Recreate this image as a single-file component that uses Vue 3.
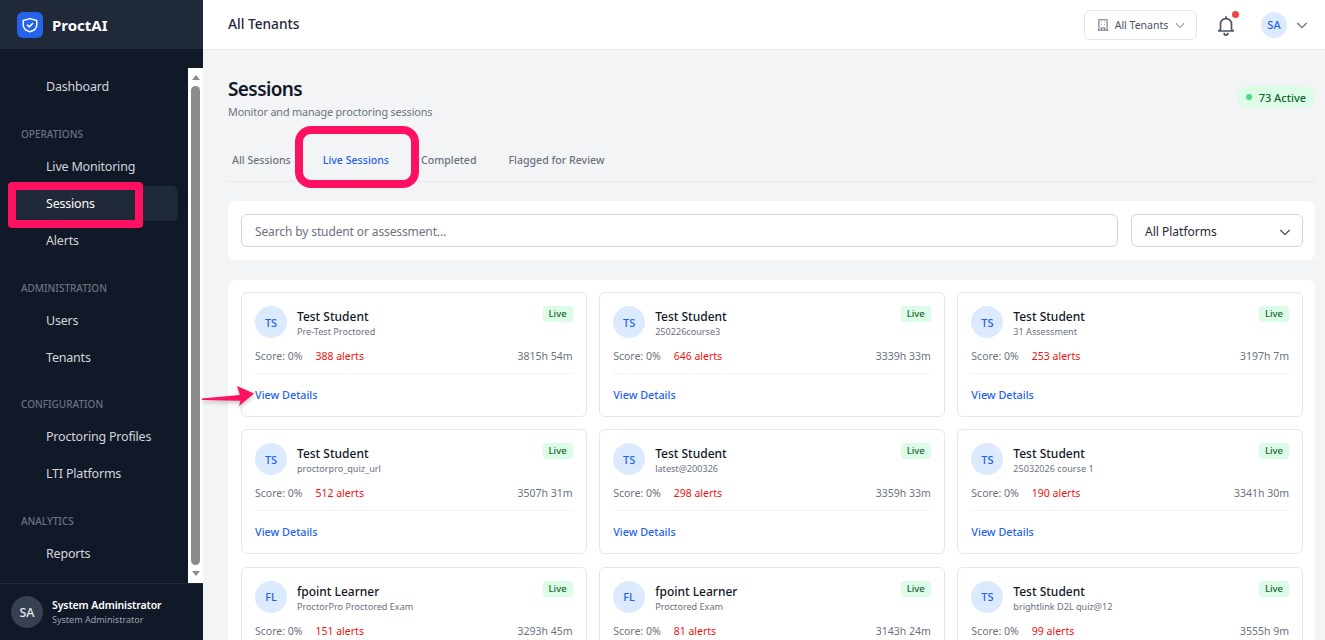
<script setup>
const nav = [
  { items: ['Dashboard'] },
  { label: 'Operations', items: ['Live Monitoring', 'Sessions', 'Alerts'] },
  { label: 'Administration', items: ['Users', 'Tenants'] },
  { label: 'Configuration', items: ['Proctoring Profiles', 'LTI Platforms'] },
  { label: 'Analytics', items: ['Reports'] },
]

const tabs = ['All Sessions', 'Live Sessions', 'Completed', 'Flagged for Review']

const sessions = [
  { initials: 'TS', name: 'Test Student', exam: 'Pre-Test Proctored', alerts: 388, time: '3815h 54m' },
  { initials: 'TS', name: 'Test Student', exam: '250226course3', alerts: 646, time: '3339h 33m' },
  { initials: 'TS', name: 'Test Student', exam: '31 Assessment', alerts: 253, time: '3197h 7m' },
  { initials: 'TS', name: 'Test Student', exam: 'proctorpro_quiz_url', alerts: 512, time: '3507h 31m' },
  { initials: 'TS', name: 'Test Student', exam: 'latest@200326', alerts: 298, time: '3359h 33m' },
  { initials: 'TS', name: 'Test Student', exam: '25032026 course 1', alerts: 190, time: '3341h 30m' },
  { initials: 'FL', name: 'fpoint Learner', exam: 'ProctorPro Proctored Exam', alerts: 151, time: '3293h 45m' },
  { initials: 'FL', name: 'fpoint Learner', exam: 'Proctored Exam', alerts: 81, time: '3143h 24m' },
  { initials: 'TS', name: 'Test Student', exam: 'brightlink D2L quiz@12', alerts: 99, time: '3555h 9m' },
]
</script>

<template>
  <div class="app">
    <aside class="sidebar">
      <div class="brand">
        <div class="logo">
          <svg width="18" height="18" viewBox="0 0 24 24" fill="none" stroke="#fff" stroke-width="2" stroke-linecap="round" stroke-linejoin="round">
            <path d="M12 3.5l9 2.5v6c0 4.5-3.8 7.5-9 9-5.2-1.5-9-4.5-9-9V6z" />
            <path d="M8.5 12l2.5 2.5 4.5-4.5" />
          </svg>
        </div>
        <span class="brand-name">ProctAI</span>
      </div>
      <div class="nav-wrap">
        <nav class="nav">
          <div v-for="(group, i) in nav" :key="i" class="group">
            <div v-if="group.label" class="group-label">{{ group.label }}</div>
            <a v-for="item in group.items" :key="item" class="nav-item" :class="{ active: item === 'Sessions' }">{{ item }}</a>
          </div>
        </nav>
        <div class="scrollbar">
          <span class="arrow up"></span>
          <span class="thumb"></span>
          <span class="arrow down"></span>
        </div>
      </div>
      <div class="user">
        <div class="user-avatar">SA</div>
        <div>
          <div class="user-name">System Administrator</div>
          <div class="user-role">System Administrator</div>
        </div>
      </div>
    </aside>

    <div class="main">
      <header class="topbar">
        <h1 class="top-title">All Tenants</h1>
        <div class="top-actions">
          <button class="tenant-btn">
            <svg width="14" height="14" viewBox="0 0 24 24" fill="none" stroke="#6b7280" stroke-width="1.8">
              <path d="M5 21V3h14v18M3 21h18M9 21v-4h6v4M9 7h1M14 7h1M9 11h1M14 11h1" />
            </svg>
            <span>All Tenants</span>
            <svg width="14" height="14" viewBox="0 0 24 24" fill="none" stroke="#9ca3af" stroke-width="2"><path d="M5 9l7 7 7-7" /></svg>
          </button>
          <div class="bell">
            <svg width="22" height="22" viewBox="0 0 24 24" fill="none" stroke="#4b5563" stroke-width="1.8" stroke-linecap="round" stroke-linejoin="round">
              <path d="M6 17V11a6 6 0 0 1 12 0v6l2 1.5H4z" />
              <path d="M10 21a2 2 0 0 0 4 0M12 3v2" />
            </svg>
            <span class="bell-dot"></span>
          </div>
          <div class="avatar-top">SA</div>
          <svg width="16" height="16" viewBox="0 0 24 24" fill="none" stroke="#6b7280" stroke-width="2"><path d="M5 9l7 7 7-7" /></svg>
        </div>
      </header>

      <main class="content">
        <div class="page-head">
          <div>
            <h2 class="page-title">Sessions</h2>
            <p class="page-sub">Monitor and manage proctoring sessions</p>
          </div>
          <div class="active-pill"><span class="pill-dot"></span>73 Active</div>
        </div>

        <div class="tabs">
          <span v-for="t in tabs" :key="t" class="tab" :class="{ current: t === 'Live Sessions' }">{{ t }}</span>
        </div>

        <div class="filters">
          <div class="search">Search by student or assessment...</div>
          <div class="select">
            All Platforms
            <svg width="16" height="16" viewBox="0 0 24 24" fill="none" stroke="#4b5563" stroke-width="2"><path d="M5 9l7 7 7-7" /></svg>
          </div>
        </div>

        <section class="panel">
          <article v-for="(s, i) in sessions" :key="i" class="card">
            <div class="card-top">
              <div class="initials">{{ s.initials }}</div>
              <div class="who">
                <div class="name">{{ s.name }}</div>
                <div class="exam">{{ s.exam }}</div>
              </div>
              <span class="live">Live</span>
            </div>
            <div class="stats">
              <span>Score: 0%</span>
              <span class="alerts">{{ s.alerts }} alerts</span>
              <span class="time">{{ s.time }}</span>
            </div>
            <div class="card-foot"><a class="details">View Details</a></div>
          </article>
        </section>
      </main>
    </div>

    <!-- annotations drawn over the screenshot -->
    <div class="mark mark-nav"></div>
    <div class="mark mark-tab"></div>
    <svg class="mark-arrow" width="56" height="26" viewBox="0 0 56 26">
      <path d="M1 14.5L39 11 36 2 53 9.5 38 22 39.5 16.7 1 16z" fill="#ff1060" />
    </svg>
  </div>
</template>

<style>
html, body {
  margin: 0;
  height: 100%;
  overflow: hidden;
}
</style>

<style scoped>
.app {
  position: relative;
  display: flex;
  height: 640px;
  overflow: hidden;
  background: #f3f4f6;
  font-family: "Noto Sans", Inter, sans-serif;
  color: #111827;
}

/* Sidebar */
.sidebar {
  width: 203px;
  flex-shrink: 0;
  display: flex;
  flex-direction: column;
  background: #111827;
}
.brand {
  height: 49px;
  flex-shrink: 0;
  display: flex;
  align-items: center;
  gap: 9px;
  padding-left: 17px;
  background: #1f2937;
}
.logo {
  width: 26px;
  height: 26px;
  border-radius: 6px;
  background: #2563eb;
  display: flex;
  align-items: center;
  justify-content: center;
}
.brand-name {
  color: #fff;
  font-size: 15px;
  font-weight: 700;
}
.nav-wrap {
  flex: 1;
  min-height: 0;
  display: flex;
  margin-top: 19px;
}
.nav {
  flex: 1;
  padding: 1px 10px 0 12px;
}
.group + .group {
  margin-top: 22.75px;
}
.group-label {
  height: 15px;
  line-height: 15px;
  margin: 0 0 7px 9px;
  font-size: 10px;
  font-weight: 500;
  text-transform: uppercase;
  color: #6b7280;
}
.nav-item {
  display: block;
  height: 35px;
  line-height: 35px;
  margin-bottom: 2px;
  padding-left: 34px;
  font-size: 12.5px;
  letter-spacing: -0.2px;
  border-radius: 6px;
  color: #d1d5db;
}
.nav-item.active {
  background: #1f2937;
  color: #fff;
}
.scrollbar {
  width: 15px;
  flex-shrink: 0;
  background: #fff;
  display: flex;
  flex-direction: column;
  align-items: center;
}
.thumb {
  flex: 1;
  width: 9px;
  margin: 6px 0;
  border-radius: 5px;
  background: #8b8b8b;
}
.arrow {
  width: 0;
  height: 0;
  margin-top: 7px;
  border-left: 4px solid transparent;
  border-right: 4px solid transparent;
  border-bottom: 5px solid #8b8b8b;
}
.arrow.down {
  margin: 0 0 7px;
  border-bottom: 0;
  border-top: 5px solid #8b8b8b;
}
.user {
  height: 57px;
  flex-shrink: 0;
  display: flex;
  align-items: center;
  gap: 9px;
  padding-left: 11px;
  box-sizing: border-box;
  border-top: 1px solid #1f2937;
}
.user-avatar {
  width: 32px;
  height: 32px;
  border-radius: 50%;
  background: #374151;
  color: #e5e7eb;
  font-size: 12.5px;
  font-weight: 500;
  display: flex;
  align-items: center;
  justify-content: center;
}
.user-name {
  color: #fff;
  font-size: 10.5px;
  font-weight: 600;
  letter-spacing: -0.1px;
  line-height: 16px;
}
.user-role {
  color: #9ca3af;
  font-size: 9px;
  line-height: 14px;
}

/* Main */
.main {
  flex: 1;
  min-width: 0;
  display: flex;
  flex-direction: column;
}
.topbar {
  height: 50px;
  flex-shrink: 0;
  box-sizing: border-box;
  display: flex;
  align-items: center;
  justify-content: space-between;
  padding: 0 15px 0 25px;
  background: #fff;
  border-bottom: 1px solid #e5e7eb;
}
.top-title {
  margin: -2px 0 0;
  font-size: 13.7px;
  font-weight: 500;
  color: #1f2937;
}
.top-actions {
  display: flex;
  align-items: center;
}
.tenant-btn {
  width: 113px;
  height: 30px;
  padding: 0 9px 0 11px;
  display: flex;
  align-items: center;
  justify-content: space-between;
  background: #fff;
  border: 1px solid #e5e7eb;
  border-radius: 6px;
  font: 400 10.5px "Noto Sans", Inter, sans-serif;
  color: #4b5563;
}
.bell {
  position: relative;
  margin: 0 24px 0 18px;
  height: 22px;
}
.bell-dot {
  position: absolute;
  top: -3px;
  right: -2px;
  width: 7px;
  height: 7px;
  border-radius: 50%;
  background: #ef4444;
}
.avatar-top {
  width: 26px;
  height: 26px;
  margin-right: 7px;
  border-radius: 50%;
  background: #dbeafe;
  color: #2563eb;
  font-size: 11px;
  font-weight: 500;
  display: flex;
  align-items: center;
  justify-content: center;
}

.content {
  flex: 1;
  min-height: 0;
  padding: 0 10px 0 25px;
}
.page-head {
  display: flex;
  justify-content: space-between;
  align-items: flex-start;
  padding-top: 26px;
}
.page-title {
  margin: 0;
  font-size: 19px;
  letter-spacing: -0.6px;
  line-height: 26px;
  font-weight: 600;
}
.page-sub {
  margin: 2px 0 0;
  font-size: 10.8px;
  letter-spacing: -0.13px;
  line-height: 16px;
  color: #6b7280;
}
.active-pill {
  margin-top: 10px;
  height: 22px;
  padding: 0 9px;
  display: flex;
  align-items: center;
  gap: 7px;
  border-radius: 11px;
  background: #dcfce7;
  color: #166534;
  font-size: 11px;
  font-weight: 500;
}
.pill-dot {
  width: 6px;
  height: 6px;
  border-radius: 50%;
  background: #4ade80;
}
.tabs {
  display: flex;
  gap: 32px;
  height: 38px;
  margin-top: 23px;
  padding-left: 4px;
  border-bottom: 1px solid #e5e7eb;
}
.tab {
  line-height: 35px;
  font-size: 10.6px;
  font-weight: 500;
  color: #6b7280;
}
.tab.current {
  color: #2563eb;
}
.filters {
  display: flex;
  gap: 13px;
  margin-top: 19px;
  padding: 13px 12px 13px 13px;
  background: #fff;
  border-radius: 8px;
}
.search,
.select {
  height: 33px;
  box-sizing: border-box;
  display: flex;
  align-items: center;
  padding-top: 2px;
  border: 1px solid #d1d5db;
  border-radius: 6px;
  font-size: 12px;
}
.search {
  flex: 1;
  padding-left: 13px;
  letter-spacing: -0.12px;
  color: #6b7280;
}
.select {
  width: 172px;
  padding-left: 13px;
  padding-right: 9px;
  justify-content: space-between;
  color: #1f2937;
}
.panel {
  display: grid;
  grid-template-columns: repeat(3, 1fr);
  gap: 12.3px 12.5px;
  margin-top: 20px;
  padding: 12px 12px 12px 13px;
  background: #fff;
  border-radius: 8px;
}
.card {
  height: 125px;
  box-sizing: border-box;
  padding: 13px 13px 0;
  border: 1px solid #e5e7eb;
  border-radius: 6px;
}
.card-top {
  display: flex;
  gap: 10px;
}
.initials {
  width: 32px;
  height: 32px;
  flex-shrink: 0;
  border-radius: 50%;
  background: #dbeafe;
  color: #2563eb;
  font-size: 11px;
  font-weight: 500;
  display: flex;
  align-items: center;
  justify-content: center;
}
.who {
  flex: 1;
  min-width: 0;
  padding-top: 2px;
}
.name {
  font-size: 12px;
  line-height: 18px;
  font-weight: 500;
}
.exam {
  font-size: 9.1px;
  line-height: 12px;
  color: #6b7280;
}
.live {
  align-self: flex-start;
  height: 16px;
  padding: 0 6px;
  line-height: 16px;
  border-radius: 3px;
  background: #dcfce7;
  color: #166534;
  font-size: 9.5px;
  font-weight: 500;
}
.stats {
  display: flex;
  gap: 13px;
  margin-top: 10px;
  font-size: 10.5px;
  line-height: 16px;
  color: #6b7280;
}
.alerts {
  color: #ef1111;
}
.time {
  margin-left: auto;
}
.card-foot {
  margin-top: 9px;
  padding-top: 8px;
  border-top: 1px solid #f3f4f6;
}
.details {
  font-size: 10.8px;
  line-height: 16px;
  font-weight: 500;
  color: #2563eb;
}

/* annotations */
.mark {
  position: absolute;
  box-sizing: border-box;
  border: 8px solid #ff1060;
}
.mark-nav {
  left: 8px;
  top: 182px;
  width: 135px;
  height: 46px;
  border-radius: 4px;
}
.mark-tab {
  left: 295px;
  top: 126px;
  width: 124px;
  height: 62px;
  border-radius: 16px;
}
.mark-arrow {
  position: absolute;
  left: 201px;
  top: 384px;
  filter: drop-shadow(0 2px 2px rgba(0, 0, 0, 0.25));
}
</style>
